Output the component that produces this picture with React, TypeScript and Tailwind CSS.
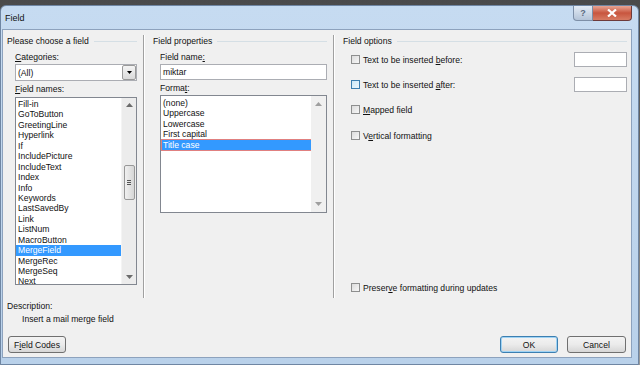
import React from 'react';

const font = { fontFamily: '"Liberation Sans", Arial, sans-serif' };

const fieldNames = [
  'Fill-in', 'GoToButton', 'GreetingLine', 'Hyperlink', 'If', 'IncludePicture',
  'IncludeText', 'Index', 'Info', 'Keywords', 'LastSavedBy', 'Link', 'ListNum',
  'MacroButton', 'MergeField', 'MergeRec', 'MergeSeq', 'Next',
];

const formats = ['(none)', 'Uppercase', 'Lowercase', 'First capital', 'Title case'];

function Arrow({ up }: { up?: boolean }) {
  return (
    <svg width="7" height="4" viewBox="0 0 7 4" className="block">
      {up ? <path d="M0 4 L3.5 0 L7 4 Z" fill="#6b6b6b" /> : <path d="M0 0 L3.5 4 L7 0 Z" fill="#6b6b6b" />}
    </svg>
  );
}

function GroupHeader({ title }: { title: string }) {
  return (
    <div className="flex items-center h-[12px]">
      <span className="whitespace-nowrap">{title}</span>
      <div className="ml-[5px] flex-1 h-px bg-[#d5dfe5]" />
    </div>
  );
}

function Check({ label, focus }: { label: React.ReactNode; focus?: boolean }) {
  return (
    <div className="flex items-center gap-[3px]">
      <div
        className={
          focus
            ? 'w-[9px] h-[9px] border border-[#3c7fb1] bg-gradient-to-br from-[#cde9f8] to-[#eaf6fd]'
            : 'w-[9px] h-[9px] border border-[#8e8f8f] bg-gradient-to-br from-[#dcdcdc] to-[#f7f7f7]'
        }
      />
      <span className="whitespace-nowrap">{label}</span>
    </div>
  );
}

function Btn({ children, def, w }: { children: React.ReactNode; def?: boolean; w: string }) {
  return (
    <div
      className={`${w} h-[17px] rounded-[3px] border ${def ? 'border-[#3c7fb1] shadow-[inset_0_0_0_1px_#9fd3f4]' : 'border-[#707070]'} bg-gradient-to-b from-[#f3f3f3] via-[#ebebeb] to-[#d6d6d6] flex items-center justify-center`}
    >
      {children}
    </div>
  );
}

export default function App() {
  return (
    <div style={font} className="w-[640px] h-[365px] overflow-hidden bg-gradient-to-b from-[#4a4a4a] to-[#9a9a9a] text-[8.6px] text-[#111] leading-[12px]">
      <div className="mt-[5px] w-[639px] h-[360px] rounded-t-[6px] border border-[#6f86a3] bg-gradient-to-b from-[#c6dbf1] to-[#b9d1ea] flex flex-col pl-[1px] pr-[6px]">
        {/* title bar */}
        <div className="h-[23px] flex items-start">
          <div className="pl-[3px] pt-[6px] text-[9px] flex-1">Field</div>
          <div className="flex">
            <div className="w-[20px] h-[15px] rounded-bl-[4px] border border-t-0 border-[#7d8fa7] bg-gradient-to-b from-[#e4ecf5] to-[#b4c4d8] flex items-center justify-center text-[9px] font-bold text-[#5a6a80]">?</div>
            <div className="w-[39px] h-[15px] rounded-br-[4px] border border-t-0 border-l-0 border-[#6d3a3a] bg-gradient-to-b from-[#e8a493] via-[#c8553e] to-[#d77b63] flex items-center justify-center">
              <svg width="10" height="8" viewBox="0 0 10 8">
                <path d="M1 0.5 L9 7.5 M9 0.5 L1 7.5" stroke="#fff" strokeWidth="2.2" />
              </svg>
            </div>
          </div>
        </div>

        {/* client area */}
        <div className="h-[329px] border border-[#8da2bd] bg-[#f0f0f0] flex flex-col">
          <div className="flex pt-[5px] h-[268px]">
            {/* left column */}
            <div className="w-[141px] border-r border-[#a0a0a0] shadow-[1px_0_0_#ffffff] pl-[4px] pr-[6px]">
              <GroupHeader title="Please choose a field" />
              <div className="pl-[8px]">
                <div className="mt-[4px] h-[12px]"><span className="underline">C</span>ategories:</div>
                <div className="mt-[1px] h-[17px] w-[122px] border border-[#abadb3] bg-white flex items-center">
                  <span className="pl-[2px] flex-1">(All)</span>
                  <div className="w-[14px] h-[15px] border border-[#9a9a9a] rounded-[2px] bg-gradient-to-b from-[#f4f4f4] to-[#dadada] flex items-center justify-center">
                    <svg width="5" height="3" viewBox="0 0 5 3"><path d="M0 0 L2.5 3 L5 0 Z" fill="#000" /></svg>
                  </div>
                </div>
                <div className="mt-[2px] h-[12px]"><span className="underline">F</span>ield names:</div>
                <div className="mt-[2px] h-[188px] w-[122px] border border-[#828790] bg-white flex">
                  <div className="flex-1 pt-[1px]">
                    {fieldNames.map((n) => (
                      <div
                        key={n}
                        className={`h-[10.45px] leading-[10.45px] pl-[2px] ${n === 'MergeField' ? 'bg-[#3399ff] text-white' : ''}`}
                      >
                        {n}
                      </div>
                    ))}
                  </div>
                  <div className="w-[15px] bg-[#ececec] border-l border-[#f4f4f4] flex flex-col items-center">
                    <div className="mt-[5px]"><Arrow up /></div>
                    <div className="mt-[58px] w-[11px] h-[35px] rounded-[2px] border border-[#989898] bg-gradient-to-r from-[#f0f0f0] to-[#d6d6d6] flex flex-col items-center justify-center gap-[1px]">
                      <div className="w-[4px] h-px bg-[#555]" />
                      <div className="w-[4px] h-px bg-[#555]" />
                      <div className="w-[4px] h-px bg-[#555]" />
                    </div>
                    <div className="mt-auto mb-[5px]"><Arrow /></div>
                  </div>
                </div>
              </div>
            </div>

            {/* middle column */}
            <div className="w-[189px] border-r border-[#a0a0a0] shadow-[1px_0_0_#ffffff] pl-[8px] pr-[6px] ml-px">
              <GroupHeader title="Field properties" />
              <div className="pl-[7px]">
                <div className="mt-[4px] h-[12px]">Field name<span className="underline">:</span></div>
                <div className="mt-[1px] h-[16px] w-[167px] border border-[#abadb3] bg-white flex items-center pl-[2px]">miktar</div>
                <div className="mt-[2px] h-[12px]">Forma<span className="underline">t</span>:</div>
                <div className="mt-[1px] h-[118px] w-[167px] border border-[#828790] bg-white flex">
                  <div className="flex-1 pt-[2px] pl-[1px]">
                    {formats.map((f) => (
                      <div
                        key={f}
                        className={`h-[10.45px] leading-[10.45px] pl-[1px] ${f === 'Title case' ? 'bg-[#3399ff] text-white outline outline-1 outline-[#e08080]' : ''}`}
                      >
                        {f}
                      </div>
                    ))}
                  </div>
                  <div className="w-[15px] bg-[#f0f0f0] flex flex-col items-center">
                    <div className="mt-[6px] opacity-60"><Arrow up /></div>
                    <div className="mt-auto mb-[6px] opacity-60"><Arrow /></div>
                  </div>
                </div>
              </div>
            </div>

            {/* right column */}
            <div className="flex-1 pl-[8px] pr-[4px] ml-px flex flex-col">
              <GroupHeader title="Field options" />
              <div className="pl-[8px]">
                <div className="mt-[5px] h-[15px] flex items-center justify-between">
                  <Check label={<>Text to be inserted <span className="underline">b</span>efore:</>} />
                  <div className="w-[53px] h-[15px] border border-[#abadb3] bg-white" />
                </div>
                <div className="mt-[10px] h-[15px] flex items-center justify-between">
                  <Check focus label={<>Text to be inserted <span className="underline">a</span>fter:</>} />
                  <div className="w-[53px] h-[15px] border border-[#abadb3] bg-white" />
                </div>
                <div className="mt-[10px] h-[15px] flex items-center">
                  <Check label={<><span className="underline">M</span>apped field</>} />
                </div>
                <div className="mt-[11px] h-[15px] flex items-center">
                  <Check label={<>V<span className="underline">e</span>rtical formatting</>} />
                </div>
                <div className="mt-[137px] h-[15px] flex items-center">
                  <Check label={<>Preser<span className="underline">v</span>e formatting during updates</>} />
                </div>
              </div>
            </div>
          </div>

          {/* description + buttons */}
          <div className="pl-[4px] pt-[2px]">
            <div className="h-[12px]">Description:</div>
            <div className="h-[12px] mt-[1px] pl-[15px]">Insert a mail merge field</div>
          </div>
          <div className="mt-[11px] flex items-center pl-[5px] pr-[5px]">
            <Btn w="w-[58px]">F<span className="underline">i</span>eld Codes</Btn>
            <div className="flex-1" />
            <Btn def w="w-[58px]">OK</Btn>
            <div className="w-[9px]" />
            <Btn w="w-[59px]">Cancel</Btn>
          </div>
        </div>
      </div>
    </div>
  );
}
